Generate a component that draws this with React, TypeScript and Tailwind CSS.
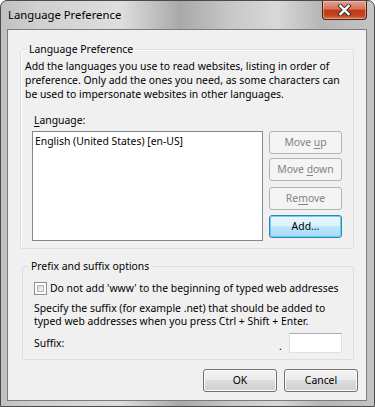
import React from "react";

function DisabledBtn({ children }: { children: React.ReactNode }) {
  return (
    <div className="h-[23px] w-[73px] rounded-[3px] border border-[#adb2b5] bg-[#f4f4f4] flex items-center justify-center text-[#838383] leading-none">
      {children}
    </div>
  );
}

function NormalBtn({ children, w }: { children: React.ReactNode; w: string }) {
  return (
    <div
      className={`${w} h-[23px] rounded-[3px] border border-[#707070] bg-[linear-gradient(to_bottom,#f2f2f2_0%,#ebebeb_50%,#dddddd_50%,#cfcfcf_100%)] shadow-[inset_0_0_0_1px_#fcfcfc] flex items-center justify-center leading-none`}
    >
      {children}
    </div>
  );
}

export default function App() {
  return (
    <div className="w-[375px] h-[407px] overflow-hidden bg-white">
      <div className="relative w-[375px] h-[407px] rounded-t-[7px] border border-[#4a4a4a] bg-[linear-gradient(to_right,#c0c0c0_0%,#d0d0d0_10%,#dedede_32%,#a9a9a9_48%,#c8c8c8_62%,#d8d8d8_74%,#b6b6b6_86%,#c4c4c4_100%)] font-['Noto_Sans',sans-serif] text-black">
        {/* title bar */}
        <div className="h-[28px] pl-[7px] flex items-center text-[11.3px] text-black">
          Language Preference
        </div>
        {/* close button */}
        <div className="absolute right-[7px] top-0 w-[45px] h-[19px] rounded-b-[4px] border border-t-0 border-[#4b2218] bg-[linear-gradient(to_bottom,#e3a08e_0%,#d4735a_45%,#c0391a_50%,#c3451f_80%,#d8704f_100%)] shadow-[inset_0_0_0_1px_rgba(255,210,200,0.5)] flex items-center justify-center">
          <svg width="15" height="12" viewBox="0 0 15 12">
            <path d="M3.5 2 L11.5 10 M11.5 2 L3.5 10" stroke="#3a2a2a" strokeWidth="4.2" strokeLinecap="square" />
            <path d="M3.5 2 L11.5 10 M11.5 2 L3.5 10" stroke="#ffffff" strokeWidth="2.4" strokeLinecap="square" />
          </svg>
        </div>

        {/* client area */}
        <div className="ml-[6px] w-[360px] h-[372px] border border-[#7c7c7c] bg-[#f0f0f0] text-[10.4px] flex flex-col">
          {/* Group 1 */}
          <div className="relative mt-[19px] ml-[12px] w-[334px] h-[200px] rounded-[3px] border border-[#d5dfe5] shadow-[1px_1px_0_#ffffff_inset]">
            <div className="absolute left-[6px] top-[-8px] px-[2px] bg-[#f0f0f0] leading-[14px]">
              Language Preference
            </div>
            <div className="pt-[9px] pl-[4px] leading-[14px] whitespace-nowrap">
              <div>Add the languages you use to read websites, listing in order of</div>
              <div>preference. Only add the ones you need, as some characters can</div>
              <div>be used to impersonate websites in other languages.</div>
            </div>
            <div className="mt-[12px] pl-[13px] leading-[14px]">
              <u className="underline-offset-[2px]">L</u>anguage:
            </div>
            <div className="mt-[4px] pl-[11px] flex">
              <div className="w-[231px] h-[110px] border border-[#828790] bg-white pl-[2px] pt-[2px] leading-[14px]">
                English (United States) [en-US]
              </div>
              <div className="ml-[6px] flex flex-col">
                <DisabledBtn>
                  Move&nbsp;<u className="underline-offset-[2px]">u</u>p
                </DisabledBtn>
                <div className="mt-[4px]">
                  <DisabledBtn>
                    Move&nbsp;<u className="underline-offset-[2px]">d</u>own
                  </DisabledBtn>
                </div>
                <div className="mt-[6px]">
                  <DisabledBtn>
                    Re<u className="underline-offset-[2px]">m</u>ove
                  </DisabledBtn>
                </div>
                <div className="mt-[5px] h-[23px] w-[73px] rounded-[3px] border border-[#3c7fb1] bg-[linear-gradient(to_bottom,#eaf6fd_0%,#d9f0fc_50%,#bee6fd_50%,#a7d9f5_100%)] shadow-[inset_0_0_0_1px_#5fd3fb] flex items-center justify-center leading-none">
                  Add...
                </div>
              </div>
            </div>
          </div>

          {/* Group 2 */}
          <div className="relative mt-[17px] ml-[14px] w-[332px] h-[94px] rounded-[3px] border border-[#d5dfe5]">
            <div className="absolute left-[6px] top-[-8px] px-[2px] bg-[#f0f0f0] leading-[14px]">
              Prefix and suffix options
            </div>
            <div className="mt-[14px] pl-[11px] flex items-center">
              <div className="w-[13px] h-[13px] border border-[#8e8f8f] bg-white p-[2px]">
                <div className="w-full h-full border border-[#b1b6bb] bg-[linear-gradient(135deg,#d1d5d9_0%,#e9ebed_60%,#f6f6f6_100%)]" />
              </div>
              <div className="ml-[3px] leading-[14px] whitespace-nowrap">
                Do not add 'www' to the beginning of typed web addresses
              </div>
            </div>
            <div className="mt-[7px] pl-[11px] leading-[13px] whitespace-nowrap">
              <div>Specify the suffix (for example .net) that should be added to</div>
              <div>typed web addresses when you press Ctrl + Shift + Enter.</div>
            </div>
            <div className="mt-[5px] pl-[11px] flex items-center h-[20px]">
              <div className="leading-[14px] w-[245px]">Suffix:</div>
              <div className="w-[10px] self-end leading-[14px]">.</div>
              <div className="w-[53px] h-[20px] border border-[#dbdfe6] border-t-[#abadb3] bg-white" />
            </div>
          </div>

          {/* bottom buttons */}
          <div className="mt-[9px] ml-[195px] flex gap-[7px]">
            <NormalBtn w="w-[74px]">OK</NormalBtn>
            <NormalBtn w="w-[74px]">Cancel</NormalBtn>
          </div>
        </div>
      </div>
    </div>
  );
}
